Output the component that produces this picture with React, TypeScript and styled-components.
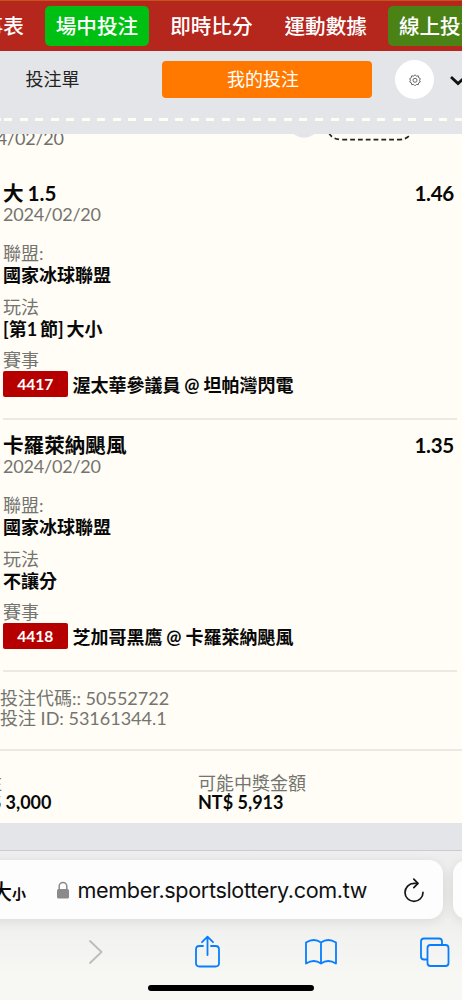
import React from "react";
import styled, { createGlobalStyle } from "styled-components";

const Global = createGlobalStyle`
  * { box-sizing: border-box; }
  html, body { margin: 0; padding: 0; overflow: hidden; }
  body { font-family: Lato, "Noto Sans CJK TC", sans-serif; color: #080808; background: #f6f6f4; }
`;

const Screen = styled.div`
  width: 462px;
  height: 1000px;
  overflow: hidden;
  display: flex;
  flex-direction: column;
  background: #e4e5e8;
`;

const Nav = styled.nav`
  flex: none;
  height: 51px;
  display: flex;
  align-items: center;
  background: #b5261c;
  border-top: 1px solid #c5551c;
  padding-left: 3px;
`;

const NavItem = styled.a<{ $bg?: string; $pull?: number; $gap?: number }>`
  flex: none;
  height: 40px;
  line-height: 40px;
  padding: 0 10.5px;
  margin-left: ${(p) => p.$pull ?? 0}px;
  margin-right: ${(p) => p.$gap ?? 11}px;
  border-radius: 5px;
  background: ${(p) => p.$bg ?? "transparent"};
  color: #fff;
  font-size: 20.6px;
  font-weight: 500;
  white-space: nowrap;
`;

const SlipHeader = styled.header`
  flex: none;
  height: 83px;
  background: #e4e5e8;
  padding-top: 9px;
  display: flex;
  flex-direction: column;
`;

const TabRow = styled.div`
  display: flex;
  align-items: center;
  height: 39px;
`;

const Tab = styled.button<{ $active?: boolean }>`
  flex: none;
  border: 0;
  padding: 0 ${(p) => (p.$active ? 8 : 0)}px 0 0;
  width: ${(p) => (p.$active ? 210 : 105)}px;
  margin-right: ${(p) => (p.$active ? 23 : 57)}px;
  height: 37px;
  border-radius: 4px;
  background: ${(p) => (p.$active ? "#ff7900" : "transparent")};
  color: ${(p) => (p.$active ? "#fff" : "#222")};
  font: 400 18px/37px Lato, "Noto Sans CJK TC", sans-serif;
`;

const RoundButton = styled.button`
  flex: none;
  width: 39px;
  height: 39px;
  border: 0;
  padding: 0;
  border-radius: 50%;
  background: #fff;
  display: flex;
  align-items: center;
  justify-content: center;
`;

const Chevron = styled.svg`
  flex: none;
  margin-left: 15px;
`;

const Perforation = styled.div`
  margin-top: 19px;
  height: 3px;
  background: repeating-linear-gradient(90deg, #fffdf3 0 8px, transparent 8px 15.55px);
  background-position-x: 4px;
`;

const Ticket = styled.main`
  flex: none;
  height: 689px;
  background: #fffdf5;
  overflow: hidden;
`;

const CutRow = styled.div`
  height: 36px;
  overflow: hidden;
  display: flex;
`;

const CutDate = styled.div`
  color: #6f6f6c;
  width: 293px;
  font-size: 18px;
  line-height: 22px;
  letter-spacing: -0.2px;
  margin-top: -7px;
  text-indent: -34px;
`;

const Leg = styled.section`
  margin: 0 5px 2.4px 3px;
  height: 250px;
  padding-top: 11px;
  border-bottom: 2px solid #ebe9e4;
`;

const LegTitle = styled.div`
  display: flex;
  justify-content: space-between;
  padding-right: 3px;
  font-size: 20.6px;
  line-height: 24px;
  font-weight: 700;
  word-spacing: -1px;
`;

const Odds = styled.span`
  letter-spacing: -0.3px;
`;

const Muted = styled.div<{ $gap?: number; $h?: number; $track?: number }>`
  color: #747471;
  font-size: 18px;
  line-height: ${(p) => p.$h ?? 21}px;
  margin-top: ${(p) => p.$gap ?? 0}px;
  letter-spacing: ${(p) => p.$track ?? 0}px;
  white-space: nowrap;
`;

const Strong = styled.div<{ $h?: number; $word?: number }>`
  font-size: 18px;
  line-height: ${(p) => p.$h ?? 22}px;
  font-weight: 700;
  word-spacing: ${(p) => p.$word ?? 0}px;
  white-space: nowrap;
`;

const Match = styled.div`
  display: flex;
  align-items: center;
  gap: 5px;
  height: 26px;
`;

const MatchName = styled(Strong)`
  padding-top: 2px;
`;

const Code = styled.span`
  width: 64.5px;
  height: 26px;
  line-height: 26px;
  border-radius: 2px;
  background: #b60000;
  color: #fff;
  text-align: center;
  font-size: 15.6px;
  font-weight: 700;
`;

const Reference = styled.div`
  height: 76.2px;
  padding-top: 14.5px;
  border-bottom: 2px solid #ebe9e4;
`;

const Totals = styled.div`
  display: flex;
  padding-top: 23.5px;
`;

const Total = styled.div<{ $w: number; $shift?: number }>`
  flex: none;
  width: ${(p) => p.$w}px;
  margin-left: ${(p) => p.$shift ?? 0}px;
`;

const Browser = styled.footer`
  flex: none;
  margin-top: 27px;
  height: 150px;
  border-top: 1px solid #cbccd0;
  background: linear-gradient(#efefef, #ebebea 40px, #f3f3f1 95px, #f7f7f4 125px);
  display: flex;
  flex-direction: column;
  overflow: hidden;
`;

const AddressRow = styled.div`
  display: flex;
  margin-top: 9px;
  gap: 10px;
  height: 59px;
`;

const Address = styled.div`
  flex: none;
  width: 463px;
  margin-left: -20px;
  padding-left: 20px;
  border-radius: 14px;
  background: #fdfdfd;
  box-shadow: 0 2px 12px rgba(0, 0, 0, 0.09);
  display: flex;
  align-items: center;
`;

const NextPage = styled(Address)`
  width: 100px;
  margin-left: 0;
`;

const TextSize = styled.span`
  display: flex;
  align-items: baseline;
  width: 65px;
  margin-left: -9px;
  font-size: 21px;
  font-weight: 500;
  small { font-size: 14px; font-weight: 700; }
`;

const Url = styled.span`
  width: 331.5px;
  padding-left: 7.5px;
  font: 400 21.6px/30px Inter, sans-serif;
  letter-spacing: -0.35px;
  color: #111;
`;

const Toolbar = styled.div`
  display: flex;
  align-items: center;
  height: 48px;
  margin-top: 9px;
  svg { flex: none; }
`;

const ToolIcon = styled.svg<{ $gap: number }>`
  margin-left: ${(p) => p.$gap}px;
`;

const HomeBar = styled.div`
  width: 166px;
  height: 6px;
  border-radius: 3px;
  margin: 9px 0 0 148px;
  background: #000;
`;

interface LegData {
  title: string;
  odds: string;
  play: string;
  code: string;
  match: string;
}

const legs: LegData[] = [
  { title: "大 1.5", odds: "1.46", play: "[第1 節] 大小", code: "4417", match: "渥太華參議員 @ 坦帕灣閃電" },
  { title: "卡羅萊納颶風", odds: "1.35", play: "不讓分", code: "4418", match: "芝加哥黑鷹 @ 卡羅萊納颶風" },
];

export default function App() {
  return (
    <Screen>
      <Global />
      <Nav>
        <NavItem $pull={-51.5}>賽事表</NavItem>
        <NavItem $bg="#00bf13">場中投注</NavItem>
        <NavItem>即時比分</NavItem>
        <NavItem>運動數據</NavItem>
        <NavItem $bg="#4a8216">線上投注</NavItem>
      </Nav>
      <SlipHeader>
        <TabRow>
          <Tab>投注單</Tab>
          <Tab $active>我的投注</Tab>
          <RoundButton aria-label="設定">
            <svg width="12" height="12" viewBox="0 0 24 24" fill="none" stroke="#555" strokeWidth="1.8" strokeLinejoin="round">
              <path d="M12 1.500l2.800 2.700 3.800-.6.700 3.700 3.300 1.900L21 12.500l1.600 3.400-3.300 1.800-.8 3.700-3.800-.6L12 23.500l-2.700-2.700-3.800.6-.8-3.700-3.300-1.800L3 12.500 1.400 9.200l3.300-1.900.7-3.700 3.800.6z" />
              <circle cx="12" cy="12.500" r="4" />
            </svg>
          </RoundButton>
          <Chevron width="19" height="12" viewBox="0 0 19 12" fill="none" stroke="#111" strokeWidth="2.8">
            <path d="M2 3l7 6.500L16 3" />
          </Chevron>
        </TabRow>
        <Perforation />
      </SlipHeader>
      <Ticket>
        <CutRow>
          <CutDate>2024/02/20</CutDate>
          <svg width="130" height="10" viewBox="293 0 130 10" fill="none">
            <ellipse cx="304" cy="-6" rx="13" ry="9.7" fill="#e4e5e8" />
            <path d="M329 -1Q332 5.7 343 5.7H398Q408 5.7 411 -1" stroke="#222" strokeWidth="1.7" strokeDasharray="4.800 3" />
          </svg>
        </CutRow>
        {legs.map((leg) => (
          <Leg key={leg.code}>
            <LegTitle>
              <span>{leg.title}</span>
              <Odds>{leg.odds}</Odds>
            </LegTitle>
            <Muted $h={20} $gap={-1} $track={-0.2}>2024/02/20</Muted>
            <Muted $gap={19}>聯盟:</Muted>
            <Strong>國家冰球聯盟</Strong>
            <Muted $gap={10.5}>玩法</Muted>
            <Strong $word={-1.5}>{leg.play}</Strong>
            <Muted $gap={10}>賽事</Muted>
            <Match>
              <Code>{leg.code}</Code>
              <MatchName $word={-0.5}>{leg.match}</MatchName>
            </Match>
          </Leg>
        ))}
        <Reference>
          <Muted $h={19.5}>投注代碼:: 50552722</Muted>
          <Muted $h={19.5}>投注 ID: 53161344.1</Muted>
        </Reference>
        <Totals>
          <Total $w={232} $shift={-34}>
            <Muted $h={18}>投注</Muted>
            <Strong $h={20}>NT$ 3,000</Strong>
          </Total>
          <Total $w={200}>
            <Muted $h={18}>可能中獎金額</Muted>
            <Strong $h={20}>NT$ 5,913</Strong>
          </Total>
        </Totals>
      </Ticket>
      <Browser>
        <AddressRow>
          <Address>
            <TextSize>
              大<small>小</small>
            </TextSize>
            <svg width="14" height="18" viewBox="0 0 14 18">
              <path d="M3.2 9V5.2a3.8 3.8 0 0 1 7.6 0V9" fill="none" stroke="#8a8a8d" strokeWidth="1.5" />
              <rect x="1" y="8" width="12" height="9.5" rx="1.6" fill="#8a8a8d" />
            </svg>
            <Url>member.sportslottery.com.tw</Url>
            <svg width="24" height="26" viewBox="0 0 24 26" fill="none" stroke="#151515" strokeWidth="1.7" strokeLinecap="round" strokeLinejoin="round">
              <path d="M15.5 6.4H12a9 9 0 1 0 9 9" />
              <path d="M11.8 2.2L16 6.4l-4.2 4.2" />
            </svg>
          </Address>
          <NextPage />
        </AddressRow>
        <Toolbar>
          <ToolIcon $gap={86} width="18" height="28" viewBox="0 0 18 28" fill="none" stroke="#bcbcbc" strokeWidth="1.8" strokeLinecap="round" strokeLinejoin="round">
            <path d="M4 3l11.5 11L4 25" />
          </ToolIcon>
          <ToolIcon $gap={89} width="28" height="34" viewBox="0 0 28 34" fill="none" stroke="#087eff" strokeWidth="1.8" strokeLinecap="round" strokeLinejoin="round">
            <path d="M10 11H6.5Q3 11 3 14.5V28q0 3.500 3.500 3.500h16Q26 31.500 26 28V14.500Q26 11 22.500 11H18M14.500 20V2M9 7.200L14.500 1.700L20 7.200" />
          </ToolIcon>
          <ToolIcon $gap={84} width="33" height="28" viewBox="0 0 33 28" fill="none" stroke="#087eff" strokeWidth="1.8" strokeLinejoin="round">
            <path d="M16 4.500Q9-.5 1 4.500V25.500Q9 20.500 16 25.500Q23 20.500 31 25.500V4.500Q23-.5 16 4.500V25.500" />
          </ToolIcon>
          <ToolIcon $gap={81} width="32" height="32" viewBox="0 0 32 32" fill="none" stroke="#087eff" strokeWidth="1.8" strokeLinejoin="round">
            <path d="M8 23.500H5Q2 23.500 2 20.500V5.500Q2 2.500 5 2.500H20Q23 2.500 23 5.500V9" />
            <rect x="8.500" y="9" width="21" height="21" rx="3" />
          </ToolIcon>
        </Toolbar>
        <HomeBar />
      </Browser>
    </Screen>
  );
}
